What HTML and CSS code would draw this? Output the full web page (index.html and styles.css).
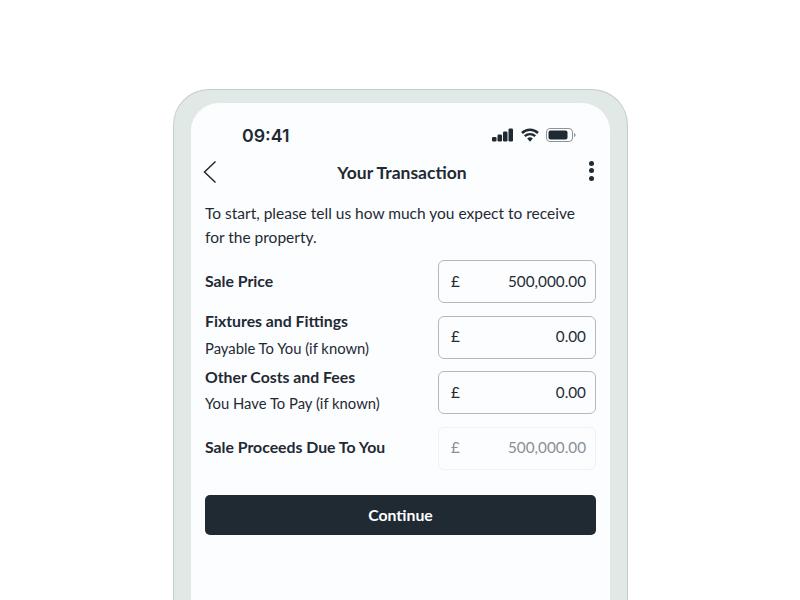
FILE: index.html
```html
<!DOCTYPE html>
<html lang="en">
<head>
    <meta charset="UTF-8">
    <meta name="viewport" content="width=device-width, initial-scale=1.0">
    <title>Your Transaction</title>
    <link rel="stylesheet" href="styles.css">
</head>
<body>
    <div class="phone">
        <div class="screen">
            <!-- Status bar -->
            <div class="status-bar">
                <span class="time">09:41</span>
                <div class="status-icons">
                    <svg width="22" height="14" viewBox="0 0 22 14">
                        <rect x="0" y="9" width="4.5" height="4.5" rx="1.2" fill="#1f2a33"/>
                        <rect x="5.5" y="6.5" width="4.5" height="7" rx="1.2" fill="#1f2a33"/>
                        <rect x="11" y="3.5" width="4.5" height="10" rx="1.2" fill="#1f2a33"/>
                        <rect x="16.500" y="0.5" width="4.5" height="13" rx="1.2" fill="#1f2a33"/>
                    </svg>
                    <svg width="18" height="14" viewBox="0 0 18 14">
                        <path d="M1 5A11.5 11.5 0 0 1 17 5" fill="none" stroke="#1f2a33" stroke-width="2.6"/>
                        <path d="M3.800 8.200A7.500 7.500 0 0 1 14.200 8.200" fill="none" stroke="#1f2a33" stroke-width="2.4"/>
                        <path d="M6.200 10.600L9 13.800L11.800 10.600A4 4 0 0 0 6.200 10.600Z" fill="#1f2a33"/>
                    </svg>
                    <svg width="30" height="14" viewBox="0 0 30 14">
                        <rect x="0.5" y="0.5" width="26" height="13" rx="3.5" fill="none" stroke="#8d9499"/>
                        <rect x="2.5" y="2.5" width="19" height="9" rx="2" fill="#1f2a33"/>
                        <path d="M28 5V9C29 8.700 29.500 8 29.500 7C29.500 6 29 5.300 28 5Z" fill="#8d9499"/>
                    </svg>
                </div>
            </div>

            <!-- Nav -->
            <div class="nav">
                <svg class="back" width="14" height="24" viewBox="0 0 14 24">
                    <path d="M12.500 1.500L1.500 12L12.500 22.500" fill="none" stroke="#1f2a33" stroke-width="1.500"/>
                </svg>
                <h1>Your Transaction</h1>
                <div class="more"><span></span><span></span><span></span></div>
            </div>

            <div class="content">
                <p class="intro">To start, please tell us how much you expect to receive for the property.</p>

                <div class="row">
                    <div class="label"><strong>Sale Price</strong></div>
                    <div class="amount"><span>£</span><span>500,000.00</span></div>
                </div>
                <div class="row">
                    <div class="label"><strong>Fixtures and Fittings</strong><small>Payable To You (if known)</small></div>
                    <div class="amount"><span>£</span><span>0.00</span></div>
                </div>
                <div class="row">
                    <div class="label"><strong>Other Costs and Fees</strong><small>You Have To Pay (if known)</small></div>
                    <div class="amount"><span>£</span><span>0.00</span></div>
                </div>
                <div class="row">
                    <div class="label"><strong>Sale Proceeds Due To You</strong></div>
                    <div class="amount disabled"><span>£</span><span>500,000.00</span></div>
                </div>

                <button class="continue-btn">Continue</button>
            </div>
        </div>
    </div>
</body>
</html>
```

FILE: styles.css
```css
* {
    margin: 0;
    padding: 0;
    box-sizing: border-box;
}

body {
    height: 600px;
    overflow: hidden;
    background-color: #fff;
    font-family: 'Lato', sans-serif;
    color: #1f2a33;
}

/* Phone frame */
.phone {
    width: 454.5px;
    height: 511px;
    margin: 89px 0 0 173px;
    padding: 13px 17px 0 16.5px;
    background-color: #e1e9e7;
    border: 1px solid #c6cccb;
    border-bottom: none;
    border-radius: 36px 36px 0 0;
}

.screen {
    height: 100%;
    background-color: #fcfdff;
    border-radius: 28px 28px 0 0;
}

/* Status bar */
.status-bar {
    height: 54px;
    padding: 10px 33.5px 0 51.5px;
    display: flex;
    align-items: center;
    justify-content: space-between;
}

.time {
    font-family: 'Inter', sans-serif;
    font-size: 17.8px;
    font-weight: 600;
}

.status-icons {
    display: flex;
    align-items: center;
    gap: 7px;
}

/* Nav */
.nav {
    height: 30px;
    padding: 0 15px 0 12px;
    display: flex;
    align-items: center;
    justify-content: space-between;
}

.nav h1 {
    font-size: 17.5px;
    font-weight: 700;
    margin-right: 2px;
}

.more {
    display: flex;
    flex-direction: column;
    gap: 2.5px;
    margin-bottom: 3px;
}

.more span {
    width: 5px;
    height: 5px;
    border-radius: 50%;
    background-color: #1f2a33;
}

/* Form */
.content {
    padding: 14px 13.5px 0 14.5px;
}

.intro {
    font-size: 15.5px;
    line-height: 24px;
    margin-bottom: 11.25px;
}

.row {
    height: 43px;
    display: flex;
    align-items: center;
    justify-content: space-between;
    margin-bottom: 12.5px;
}

.label {
    padding-bottom: 2px;
}

.label strong {
    display: block;
    font-size: 15.8px;
    line-height: 18px;
}

.label small {
    display: block;
    font-size: 14.8px;
    line-height: 18px;
    margin-top: 8.5px;
    margin-bottom: 4px;
}

.amount {
    width: 158px;
    height: 43px;
    padding: 0 9px 2px 12px;
    display: flex;
    align-items: center;
    justify-content: space-between;
    font-size: 15.3px;
    border: 1px solid #b5b9bc;
    border-radius: 6px;
}

.amount.disabled {
    color: #8a8f93;
    border-color: #f0f1f3;
}

.continue-btn {
    display: block;
    width: 100%;
    height: 40px;
    margin-top: 25.25px;
    padding-bottom: 2px;
    background-color: #1f2a33;
    color: #fff;
    border: none;
    border-radius: 5px;
    font-family: 'Lato', sans-serif;
    font-size: 15.8px;
    font-weight: 700;
}
```
